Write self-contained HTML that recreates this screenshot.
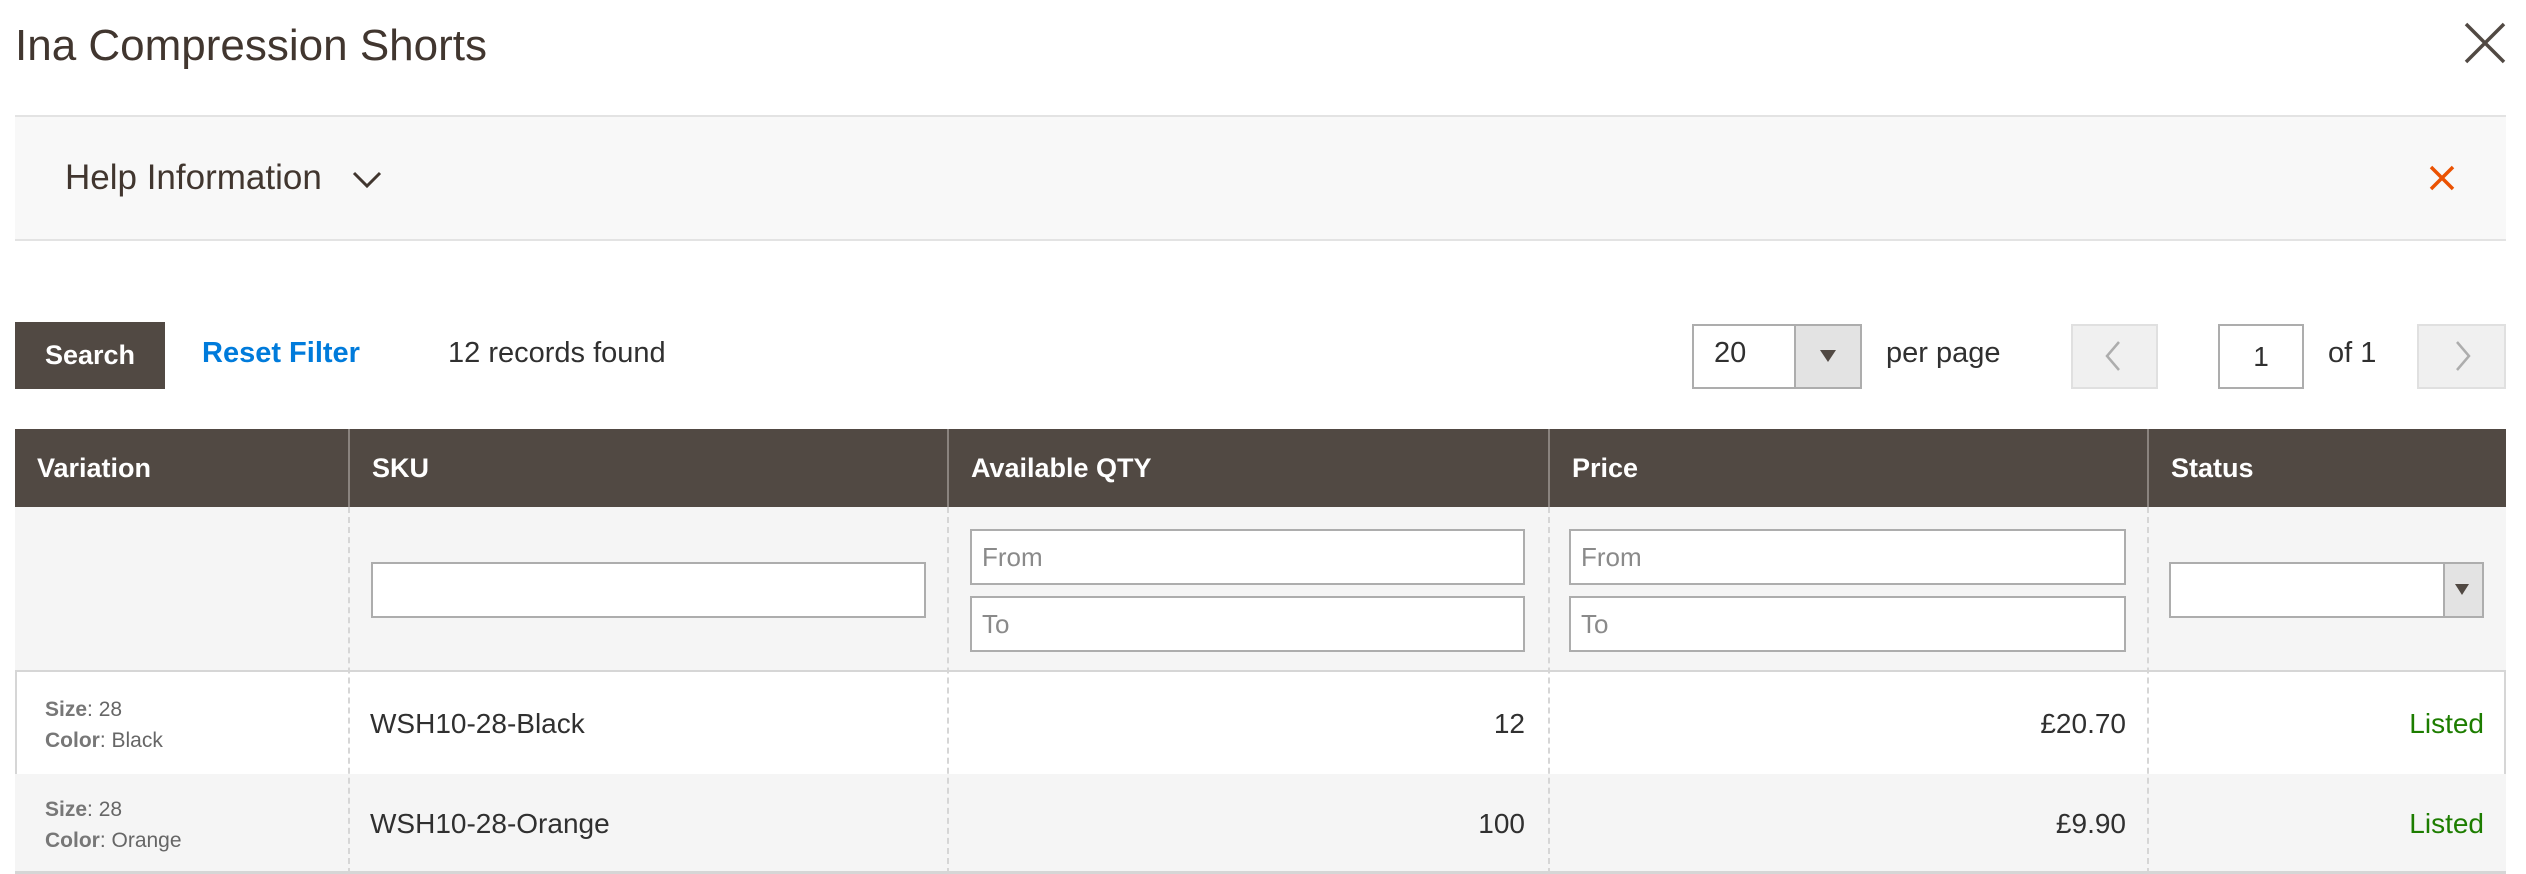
<!DOCTYPE html>
<html><head><meta charset="utf-8"><style>
*{box-sizing:border-box;margin:0;padding:0}
body{width:2526px;height:874px;background:#fff;font-family:"Liberation Sans",Arial,sans-serif;color:#303030;position:relative;overflow:hidden}
.a{position:absolute}
.title{left:15px;top:21px;font-size:44px;color:#41362f}
.help{left:15px;top:115px;width:2491px;height:126px;background:#f8f8f8;border-top:2px solid #e3e3e3;border-bottom:2px solid #e3e3e3}
.btn{left:15px;top:322px;width:150px;height:67px;background:#514943;color:#fff;font-weight:bold;font-size:27px;line-height:67px;text-align:center}
.t27{font-size:29px}
.sel{border:2px solid #adadad;background:#fff}
.nav{background:#f0f0f0;border:2px solid #e0e0e0}
.th{top:429px;height:78px;background:#514943;color:#fff;font-weight:bold;font-size:27px;line-height:78px;padding-left:22px}
.inp{background:#fff;border:2px solid #adadad;height:56px;font-size:26px;color:#8a8a8a;padding-left:10px;line-height:52px}
.vl{border-left:2px dashed #d6d6d6;top:507px;height:367px;width:0}
.cell{font-size:28px;line-height:100px}
.var{font-size:21px;color:#666;line-height:31px}
.var b{color:#777}
.g{color:#1d7d00}
</style></head><body>
<div class="a title">Ina Compression Shorts</div>
<svg class="a" style="left:2464px;top:22px" width="42" height="42" viewBox="0 0 42 42"><path d="M2 2L40 40M40 2L2 40" stroke="#514943" stroke-width="3.5"/></svg>
<div class="a help"></div>
<div class="a" style="left:65px;top:158px;font-size:35px;color:#41362f">Help Information</div>
<svg class="a" style="left:352px;top:171px" width="30" height="18" viewBox="0 0 30 18"><path d="M2 2L15 15L28 2" stroke="#41362f" stroke-width="3" fill="none"/></svg>
<svg class="a" style="left:2429px;top:165px" width="26" height="26" viewBox="0 0 26 26"><path d="M2 2L24 24M24 2L2 24" stroke="#eb5202" stroke-width="3.5"/></svg>

<div class="a btn">Search</div>
<div class="a t27" style="left:202px;top:337px;color:#007bdb;font-weight:bold">Reset Filter</div>
<div class="a t27" style="left:448px;top:337px">12 records found</div>

<div class="a sel" style="left:1692px;top:324px;width:170px;height:65px"></div>
<div class="a" style="left:1794px;top:326px;width:66px;height:61px;background:#e3e3e3;border-left:2px solid #adadad"></div>
<svg class="a" style="left:1820px;top:350px" width="16" height="12"><path d="M0 0H16L8 12Z" fill="#514943"/></svg>
<div class="a t27" style="left:1714px;top:337px">20</div>
<div class="a t27" style="left:1886px;top:337px">per page</div>
<div class="a nav" style="left:2071px;top:324px;width:87px;height:65px"></div>
<svg class="a" style="left:2104px;top:340px" width="18" height="32"><path d="M15 2L3 16L15 30" stroke="#adadad" stroke-width="2.5" fill="none"/></svg>
<div class="a sel" style="left:2218px;top:324px;width:86px;height:65px;text-align:center;font-size:28px;line-height:61px">1</div>
<div class="a t27" style="left:2328px;top:337px">of 1</div>
<div class="a nav" style="left:2417px;top:324px;width:89px;height:65px"></div>
<svg class="a" style="left:2454px;top:340px" width="18" height="32"><path d="M3 2L15 16L3 30" stroke="#adadad" stroke-width="2.5" fill="none"/></svg>

<div class="a" style="left:15px;top:429px;width:2491px;height:445px;border:2px solid #d6d6d6;border-top:none"></div>
<div class="a th" style="left:15px;width:333px;top:429px">Variation</div>
<div class="a th" style="left:348px;width:599px;border-left:2px solid #8a837e">SKU</div>
<div class="a th" style="left:947px;width:601px;border-left:2px solid #8a837e">Available QTY</div>
<div class="a th" style="left:1548px;width:599px;border-left:2px solid #8a837e">Price</div>
<div class="a th" style="left:2147px;width:359px;border-left:2px solid #8a837e">Status</div>
<div class="a" style="left:15px;top:507px;width:2491px;height:165px;background:#f5f5f5;border-bottom:2px solid #d6d6d6"></div>
<div class="a" style="left:15px;top:774px;width:2491px;height:98px;background:#f5f5f5"></div>
<div class="a" style="left:15px;top:871px;width:2491px;height:3px;background:#d6d6d6"></div>
<div class="a vl" style="left:348px"></div>
<div class="a vl" style="left:947px"></div>
<div class="a vl" style="left:1548px"></div>
<div class="a vl" style="left:2147px"></div>

<div class="a inp" style="left:371px;top:562px;width:555px"></div>
<div class="a inp" style="left:970px;top:529px;width:555px">From</div>
<div class="a inp" style="left:970px;top:596px;width:555px">To</div>
<div class="a inp" style="left:1569px;top:529px;width:557px">From</div>
<div class="a inp" style="left:1569px;top:596px;width:557px">To</div>
<div class="a inp" style="left:2169px;top:562px;width:315px"></div>
<div class="a" style="left:2443px;top:564px;width:39px;height:52px;background:#e3e3e3;border-left:2px solid #adadad"></div>
<svg class="a" style="left:2455px;top:584px" width="14" height="11"><path d="M0 0H14L7 11Z" fill="#514943"/></svg>

<div class="a var" style="left:45px;top:694px"><b>Size</b>: 28<br><b>Color</b>: Black</div>
<div class="a cell" style="left:370px;top:674px">WSH10-28-Black</div>
<div class="a cell" style="left:1300px;width:225px;text-align:right;top:674px">12</div>
<div class="a cell" style="left:1900px;width:226px;text-align:right;top:674px">£20.70</div>
<div class="a cell g" style="left:2250px;width:234px;text-align:right;top:674px">Listed</div>

<div class="a var" style="left:45px;top:794px"><b>Size</b>: 28<br><b>Color</b>: Orange</div>
<div class="a cell" style="left:370px;top:774px">WSH10-28-Orange</div>
<div class="a cell" style="left:1300px;width:225px;text-align:right;top:774px">100</div>
<div class="a cell" style="left:1900px;width:226px;text-align:right;top:774px">£9.90</div>
<div class="a cell g" style="left:2250px;width:234px;text-align:right;top:774px">Listed</div>
</body></html>
